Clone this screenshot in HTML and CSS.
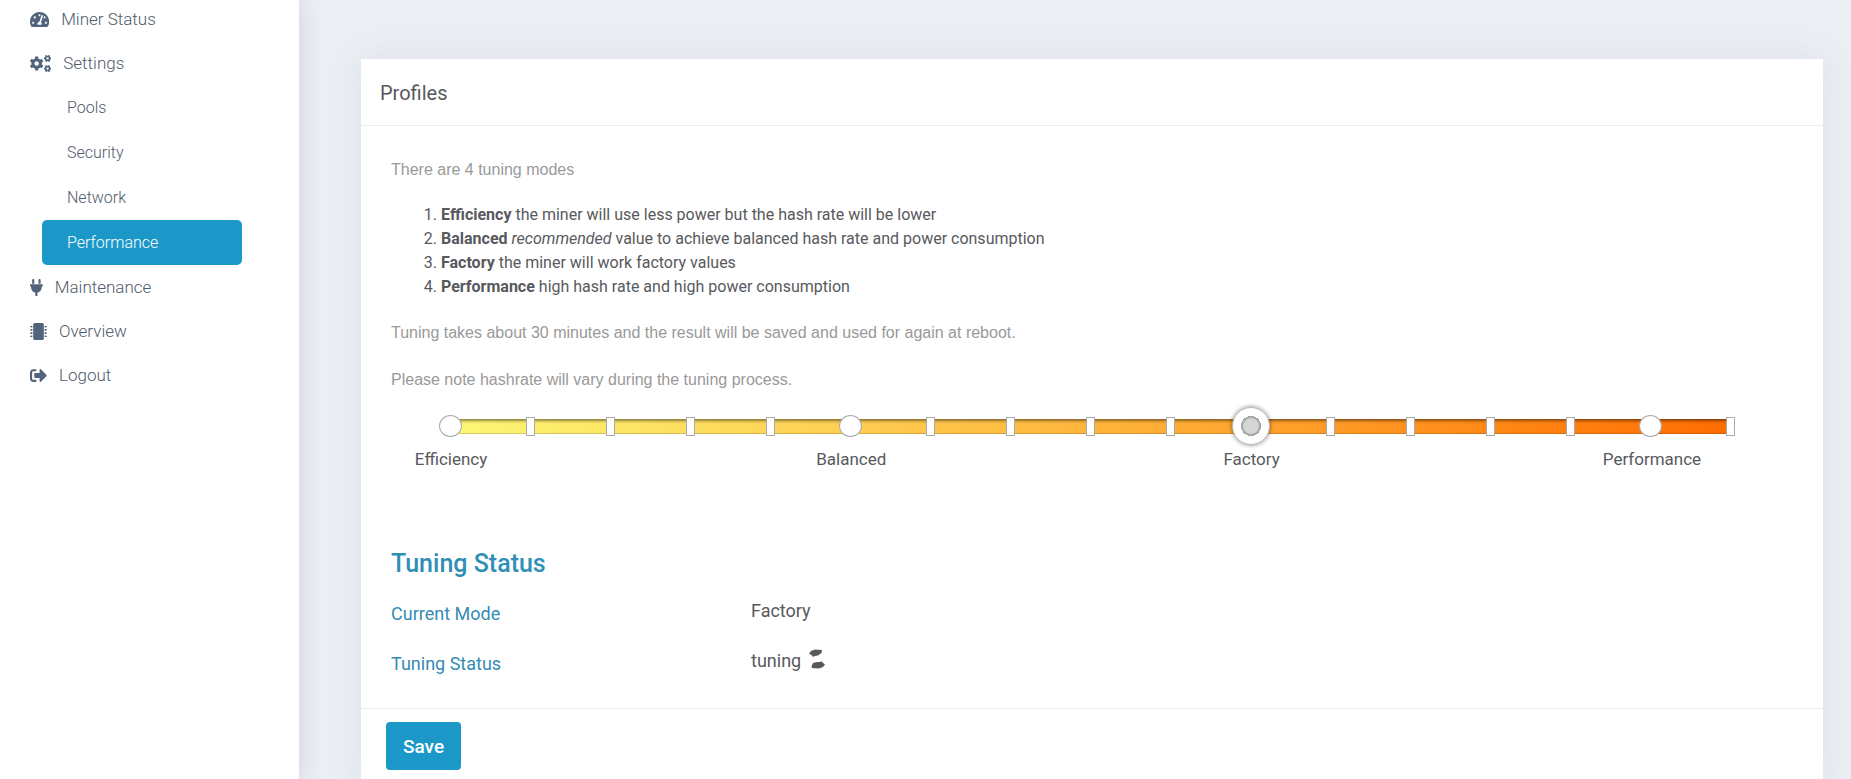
FILE: index.html
```html
<!DOCTYPE html>
<html lang="en">
<head>
    <meta charset="UTF-8">
    <meta name="viewport" content="width=device-width, initial-scale=1.0">
    <title>Performance</title>
    <link rel="stylesheet" href="styles.css">
</head>
<body>
    <div class="layout">
        <!-- Sidebar -->
        <aside class="sidebar">
            <ul class="menu">
                <li>
                    <a href="#status">
                        <svg class="icon" viewBox="0 0 576 512"><path d="M288 32C128.94 32 0 160.94 0 320c0 52.8 14.25 102.26 39.06 144.8 5.61 9.62 16.3 15.2 27.44 15.2h443c11.14 0 21.83-5.58 27.44-15.2C561.75 422.26 576 372.8 576 320c0-159.06-128.94-288-288-288zm0 64c14.71 0 26.58 10.13 30.32 23.65-1.11 2.26-2.64 4.23-3.45 6.67l-9.22 27.67c-5.13 3.49-10.97 6.01-17.64 6.01-17.67 0-32-14.33-32-32S270.33 96 288 96zM96 384c-17.67 0-32-14.33-32-32s14.33-32 32-32 32 14.33 32 32-14.33 32-32 32zm48-160c-17.67 0-32-14.33-32-32s14.33-32 32-32 32 14.33 32 32-14.33 32-32 32zm246.77-72.41l-61.33 184C343.13 347.33 352 364.54 352 384c0 11.72-3.38 22.55-8.88 32H232.88c-5.5-9.45-8.88-20.28-8.88-32 0-33.94 26.5-61.43 59.9-63.59l61.34-184.01c4.17-12.56 17.73-19.45 30.36-15.17 12.57 4.19 19.35 17.79 15.17 30.36zm14.66 57.2l15.52-46.55c3.47-1.29 7.13-2.23 11.05-2.23 17.67 0 32 14.33 32 32s-14.33 32-32 32c-11.38-.01-20.89-6.28-26.57-15.22zM480 384c-17.67 0-32-14.33-32-32s14.33-32 32-32 32 14.33 32 32-14.33 32-32 32z"/></svg>
                        Miner Status
                    </a>
                </li>
                <li>
                    <a href="#settings">
                        <svg class="icon" viewBox="0 0 640 512">
                            <circle cx="200" cy="256" r="158"/>
                            <path class="teeth-lg" d="M200 48v416M20 152l360 208M20 360l360-208"/>
                            <circle class="hole" cx="200" cy="256" r="66"/>
                            <circle cx="530" cy="104" r="84"/>
                            <path class="teeth-sm" d="M420 104h220M475 9l110 190M475 199l110-190"/>
                            <circle class="hole" cx="530" cy="104" r="34"/>
                            <circle cx="530" cy="408" r="84"/>
                            <path class="teeth-sm" d="M420 408h220M475 313l110 190M475 503l110-190"/>
                            <circle class="hole" cx="530" cy="408" r="34"/>
                        </svg>
                        Settings
                    </a>
                    <ul class="submenu">
                        <li><a href="#pools">Pools</a></li>
                        <li><a href="#security">Security</a></li>
                        <li><a href="#network">Network</a></li>
                        <li><a href="#performance" class="active">Performance</a></li>
                    </ul>
                </li>
                <li>
                    <a href="#maintenance">
                        <svg class="icon" viewBox="0 0 384 512"><path d="M256 144V32c0-17.673 14.327-32 32-32s32 14.327 32 32v112h-64zm112 16H16c-8.837 0-16 7.163-16 16v32c0 8.837 7.163 16 16 16h16v32c0 77.406 54.969 141.971 128 156.796V512h64v-99.204c73.031-14.825 128-79.39 128-156.796v-32h16c8.837 0 16-7.163 16-16v-32c0-8.837-7.163-16-16-16zm-240-16V32c0-17.673-14.327-32-32-32S64 14.327 64 32v112h64z"/></svg>
                        Maintenance
                    </a>
                </li>
                <li>
                    <a href="#overview">
                        <svg class="icon" viewBox="0 0 512 512">
                            <rect x="96" width="320" height="512" rx="48"/>
                            <path d="M24 88h48v48H24v-12H0v-24h24zM24 184h48v48H24v-12H0v-24h24zM24 280h48v48H24v-12H0v-24h24zM24 376h48v48H24v-12H0v-24h24zM440 88h48v12h24v24h-24v12h-48zM440 184h48v12h24v24h-24v12h-48zM440 280h48v12h24v24h-24v12h-48zM440 376h48v12h24v24h-24v12h-48z"/>
                        </svg>
                        Overview
                    </a>
                </li>
                <li>
                    <a href="#logout">
                        <svg class="icon" viewBox="0 0 512 512"><path d="M497 273L329 441c-15 15-41 4.5-41-17v-96H152c-13.3 0-24-10.7-24-24v-96c0-13.3 10.7-24 24-24h136V88c0-21.4 25.9-32 41-17l168 168c9.3 9.4 9.3 24.6 0 34zM192 436v-40c0-6.6-5.4-12-12-12H96c-17.7 0-32-14.3-32-32V160c0-17.7 14.3-32 32-32h84c6.6 0 12-5.4 12-12V76c0-6.6-5.4-12-12-12H96c-53 0-96 43-96 96v192c0 53 43 96 96 96h84c6.6 0 12-5.4 12-12z"/></svg>
                        Logout
                    </a>
                </li>
            </ul>
        </aside>

        <main class="content">
            <form class="card">
                <div class="card-header">Profiles</div>

                <div class="card-body">
                    <p class="note">There are 4 tuning modes</p>
                    <ol class="modes">
                        <li><b>Efficiency</b> the miner will use less power but the hash rate will be lower</li>
                        <li><b>Balanced</b> <i>recommended</i> value to achieve balanced hash rate and power consumption</li>
                        <li><b>Factory</b> the miner will work factory values</li>
                        <li><b>Performance</b> high hash rate and high power consumption</li>
                    </ol>
                    <p class="note">Tuning takes about 30 minutes and the result will be saved and used for again at reboot.</p>
                    <p class="note">Please note hashrate will vary during the tuning process.</p>

                    <!-- Tuning slider -->
                    <div class="slider">
                        <div class="track"></div>
                        <div class="ticks">
                            <span class="round"></span>
                            <span></span><span></span><span></span><span></span>
                            <span class="round"></span>
                            <span></span><span></span><span></span><span></span>
                            <span class="round"></span>
                            <span></span><span></span><span></span><span></span>
                            <span class="round"></span>
                            <span></span>
                        </div>
                        <input type="range" min="0" max="16" value="10" aria-label="Tuning mode">
                    </div>
                    <div class="slider-labels">
                        <span>Efficiency</span>
                        <span>Balanced</span>
                        <span>Factory</span>
                        <span>Performance</span>
                    </div>

                    <h2>Tuning Status</h2>
                    <dl class="status">
                        <dt>Current Mode</dt>
                        <dd>Factory</dd>
                        <dt>Tuning Status</dt>
                        <dd>
                            tuning
                            <svg class="spinner" viewBox="0 0 16 20"><path d="M0 4.500L2 2 6 .5 13 1 12.500 4 9 6.500 5.500 7 4 8 3 6.500zM16 15.500L14 18 10 19.500 3 19 2.500 17.500 4 14 8 13 11.500 13 12.500 12 13.500 13.500z"/></svg>
                        </dd>
                    </dl>
                </div>

                <div class="card-footer">
                    <button type="submit" class="save-btn">Save</button>
                </div>
            </form>
        </main>
    </div>
</body>
</html>
```
FILE: styles.css
```css
* {
    margin: 0;
    padding: 0;
    box-sizing: border-box;
}

body {
    font-family: Roboto, sans-serif;
    font-size: 16px;
    line-height: 24px;
    color: #58595d;
    background: #ebeff4;
}

.layout {
    display: flex;
    min-height: 100vh;
    overflow: hidden;
}

/* Sidebar */
.sidebar {
    flex: 0 0 299px;
    background: #fff;
    box-shadow: 0 0 24px rgba(0, 0, 0, 0.12);
}

.menu {
    margin-top: -3px;
    list-style: none;
}

.menu a {
    display: flex;
    align-items: center;
    gap: 12px;
    height: 44px;
    padding-left: 30px;
    font-size: 17px;
    font-weight: 300;
    color: #4f5b6b;
    text-decoration: none;
}

.icon {
    height: 17px;
    fill: #52647b;
}

.icon .hole {
    fill: #fff;
}

.teeth-lg {
    stroke: #52647b;
    stroke-width: 96;
}

.teeth-sm {
    stroke: #52647b;
    stroke-width: 52;
}

.submenu {
    list-style: none;
    padding: 0 57px 0 42px;
}

.submenu a {
    height: 45px;
    padding-left: 25px;
    font-size: 16px;
}

.submenu a.active {
    background: #1b98c8;
    border-radius: 5px;
    color: #fff;
}

/* Card */
.content {
    flex: 1;
    padding: 59px 28px 0 62px;
}

.card {
    min-height: 100%;
    background: #fff;
    box-shadow: 0 0 35px rgba(82, 90, 110, 0.09);
}

.card-header {
    padding: 22px 19px 20px;
    border-bottom: 1px solid #ebedef;
    font-size: 20px;
}

.card-body {
    padding: 32px 30px 30px;
}

.note {
    margin-bottom: 23px;
    font-family: "Liberation Sans", Arial, sans-serif;
    color: #999;
}

.modes {
    margin: -2px 0 22px;
    padding-left: 50px;
}

/* Slider */
.slider {
    display: grid;
    align-items: center;
    height: 38px;
    margin: -8px 62px 0 59px;
}

.track,
.ticks,
.slider input {
    grid-area: 1 / 1;
}

.track {
    height: 15px;
    background: linear-gradient(to right, #fdf775, #ffa831 60%, #ff6d00);
    box-shadow: inset 0 2px 3px rgba(0, 0, 0, 0.45), inset 0 -1px 1px rgba(0, 0, 0, 0.15);
}

.ticks {
    display: flex;
    justify-content: space-between;
    align-items: center;
    margin: 0 -11px;
}

.ticks span {
    width: 9px;
    height: 19px;
    margin: 0 7px;
    background: #fff;
    border: 1px solid #aaa;
}

.ticks .round {
    width: 23px;
    height: 22px;
    margin: 0;
    border-radius: 50%;
}

.slider input {
    height: 38px;
    margin: 0 -19px;
    background: none;
    -webkit-appearance: none;
    appearance: none;
    cursor: pointer;
}

.slider input::-webkit-slider-thumb {
    -webkit-appearance: none;
    width: 38px;
    height: 38px;
    border: 1px solid #b5b5b5;
    border-radius: 50%;
    background: radial-gradient(circle, #d6d6d6 7px, #a3a3a3 9px, #a3a3a3 10px, #fff 10px);
    box-shadow: 0 0 4px rgba(0, 0, 0, 0.5);
}

.slider-labels {
    display: grid;
    grid-template-columns: 5fr 5fr 5fr 1fr;
    margin: 2px 61px 79px 60px;
    font-size: 17px;
}

.slider-labels span {
    display: flex;
    justify-content: center;
    width: 0;
    white-space: nowrap;
}

/* Tuning status */
h2 {
    margin-bottom: 19px;
    font-size: 25px;
    font-weight: 500;
    line-height: 28px;
    color: #2f8fb7;
}

.status {
    display: grid;
    grid-template-columns: 360px 1fr;
    row-gap: 19px;
    font-size: 18px;
    line-height: 28px;
}

.status dt {
    padding-top: 3px;
    color: #368bb5;
}

.status dd {
    display: flex;
    gap: 8px;
}

.spinner {
    width: 16px;
    height: 20px;
    margin-top: 2px;
    fill: #58595d;
}

.card-footer {
    padding: 13px 25px;
    border-top: 1px solid #ebedef;
}

.save-btn {
    height: 48px;
    padding: 0 17px;
    border: none;
    border-radius: 4px;
    background: #1b98c8;
    color: #fff;
    font-family: inherit;
    font-size: 19px;
    font-weight: 500;
    cursor: pointer;
}
```
